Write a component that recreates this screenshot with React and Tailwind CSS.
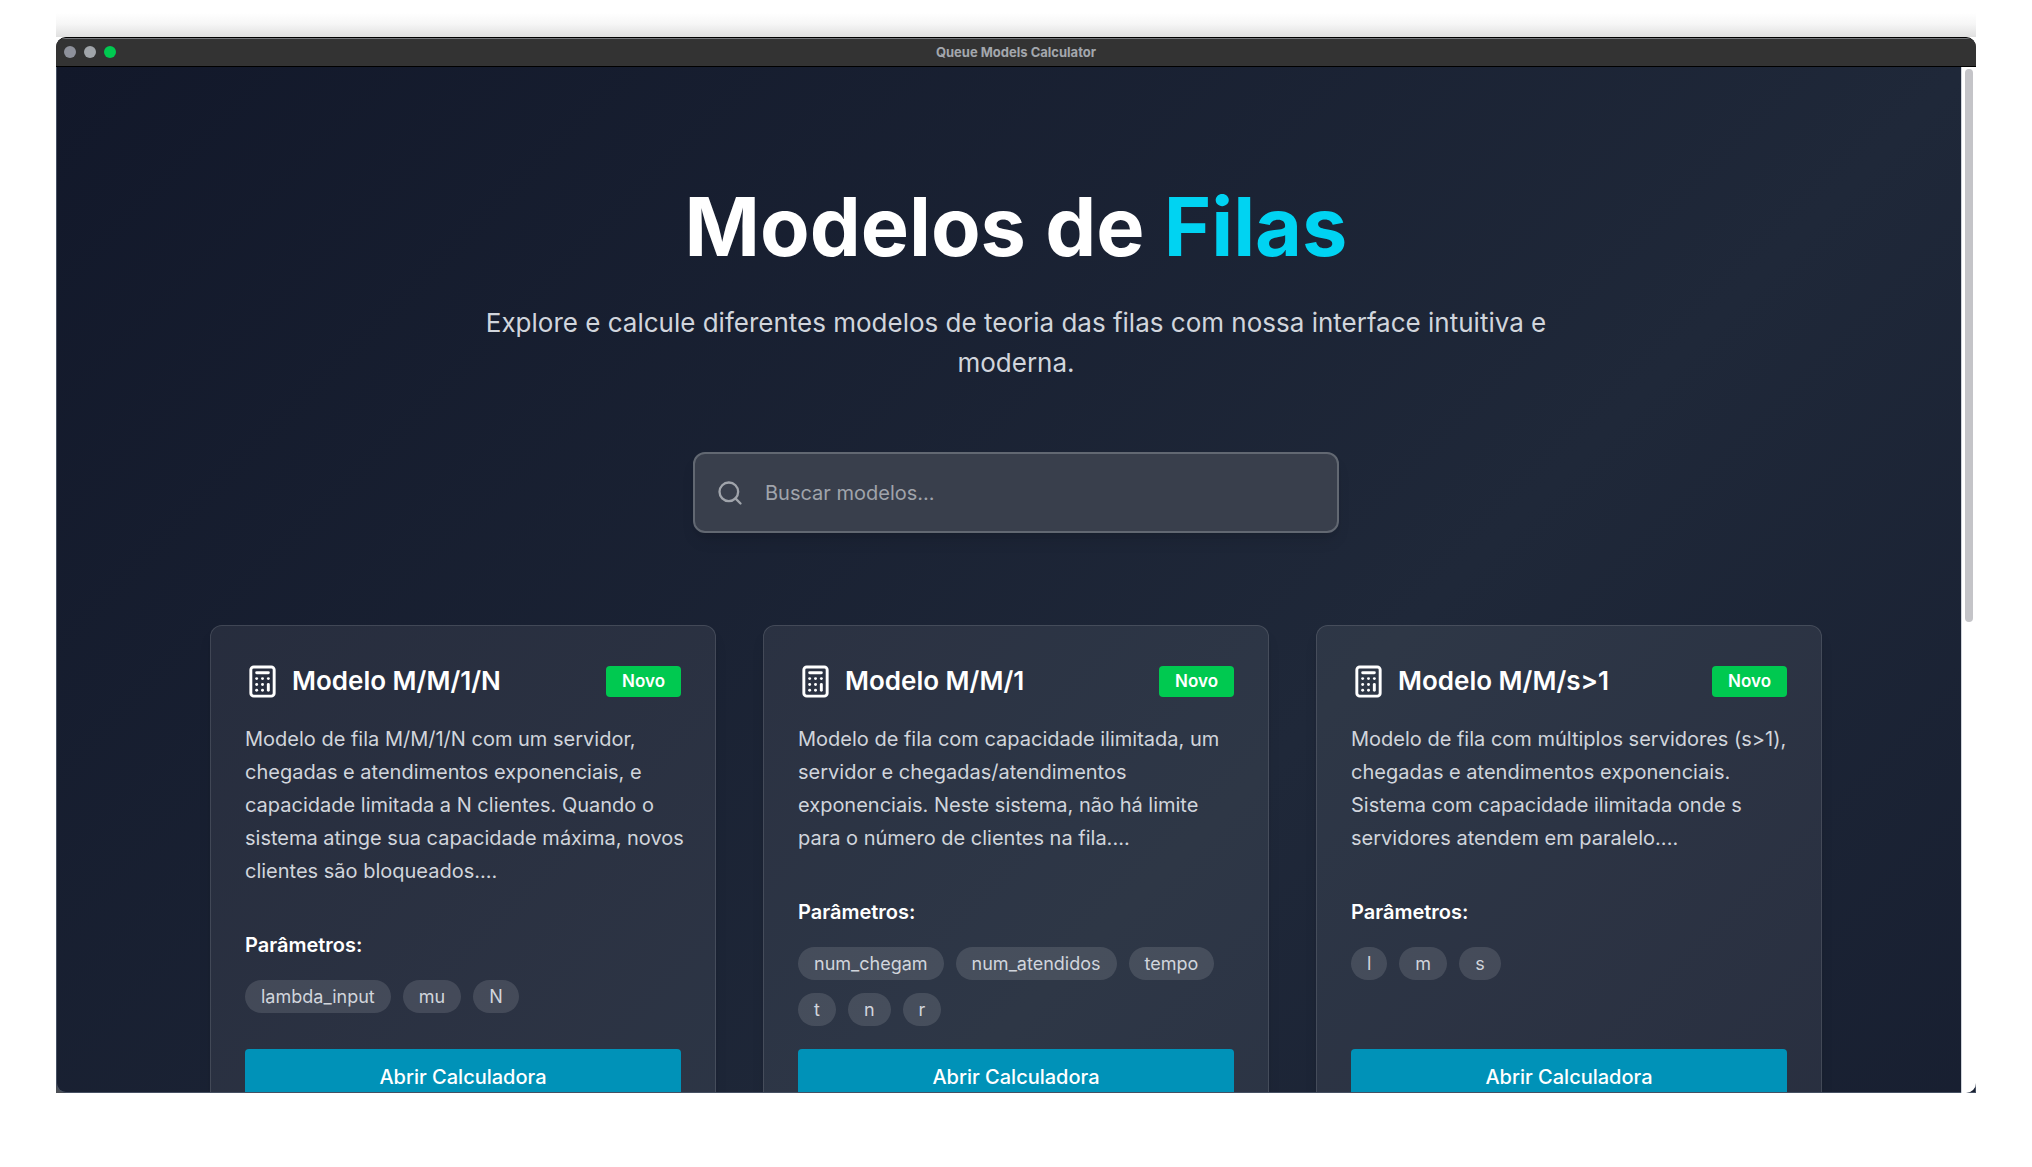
import React, { useState } from 'react';
import { Calculator, Search } from 'lucide-react';

const models = [
  {
    name: 'Modelo M/M/1/N',
    description:
      'Modelo de fila M/M/1/N com um servidor, chegadas e atendimentos exponenciais, e capacidade limitada a N clientes. Quando o sistema atinge sua capacidade máxima, novos clientes são bloqueados....',
    params: ['lambda_input', 'mu', 'N'],
  },
  {
    name: 'Modelo M/M/1',
    description:
      'Modelo de fila com capacidade ilimitada, um servidor e chegadas/atendimentos exponenciais. Neste sistema, não há limite para o número de clientes na fila....',
    params: ['num_chegam', 'num_atendidos', 'tempo', 't', 'n', 'r'],
  },
  {
    name: 'Modelo M/M/s>1',
    description:
      'Modelo de fila com múltiplos servidores (s>1), chegadas e atendimentos exponenciais. Sistema com capacidade ilimitada onde s servidores atendem em paralelo....',
    params: ['l', 'm', 's'],
  },
];

function TitleBar() {
  return (
    <header className="grid h-[29px] shrink-0 grid-cols-3 items-center border-t border-b border-t-[#77797d] border-b-black bg-[#333333] px-2 pb-0.5">
      <div className="flex gap-2">
        <span className="size-3 rounded-full bg-[#8e919b]" />
        <span className="size-3 rounded-full bg-[#a1a5aa]" />
        <span className="size-3 rounded-full bg-[#00c950]" />
      </div>
      <p className="text-center text-[13px] leading-4 font-bold text-[#a3a7ad]">Queue Models Calculator</p>
    </header>
  );
}

function SearchBox({ value, onChange }) {
  return (
    <label className="mx-auto flex h-[81px] w-full max-w-[646px] items-center gap-[21px] rounded-xl border-2 border-[#626872] bg-[#393f4c] px-[21px] shadow-lg">
      <Search className="size-7 shrink-0 text-[#a0a4ab]" strokeWidth={2} />
      <input
        type="text"
        aria-label="Buscar modelos"
        placeholder="Buscar modelos..."
        value={value}
        onChange={(e) => onChange(e.target.value)}
        className="min-w-0 flex-1 bg-transparent text-xl text-white outline-none placeholder:text-[#a0a4ab]"
      />
    </label>
  );
}

function ModelCard({ model }) {
  return (
    <article className="flex flex-col rounded-xl border border-white/12 bg-white/7 p-[34px] shadow-lg">
      <div className="flex h-[42px] items-center justify-between">
        <h2 className="flex items-center gap-3 text-[26px] leading-9 font-semibold text-white">
          <Calculator className="size-[35px] shrink-0" strokeWidth={2} />
          {model.name}
        </h2>
        <span className="rounded-sm bg-[#00c950] px-4 text-[17px] leading-[31px] font-semibold text-white">Novo</span>
      </div>

      <p className="mt-[21px] -mr-2 text-xl leading-[33px] text-gray-300">{model.description}</p>

      <h3 className="mt-[43px] text-xl leading-7 font-semibold text-white">Parâmetros:</h3>
      <ul className="mt-[21px] mb-[23px] flex flex-wrap gap-x-3 gap-y-[13px]">
        {model.params.map((param) => (
          <li key={param} className="rounded-full bg-white/12 px-4 text-lg leading-[33px] text-gray-300">
            {param}
          </li>
        ))}
      </ul>

      <button type="button" className="mt-auto h-14 w-full shrink-0 rounded-sm bg-[#0092b8] text-xl font-medium text-white">
        Abrir Calculadora
      </button>
    </article>
  );
}

export default function App() {
  const [searchTerm, setSearchTerm] = useState('');

  const filteredModels = models.filter((model) =>
    model.name.toLowerCase().includes(searchTerm.toLowerCase())
  );

  return (
    <div className="flex h-screen flex-col bg-white px-14 pb-[74px] font-['Inter',sans-serif]">
      <div className="h-[37px] shrink-0 bg-linear-to-b from-white from-35% via-[#f6f6f6] via-65% to-[#e0e0e0]" />

      <div className="relative flex min-h-0 flex-1 flex-col overflow-hidden rounded-t-[10px] border-t border-t-black bg-[#4b4f56]">
        <TitleBar />

        <main className="min-h-0 flex-1 overflow-hidden rounded-bl-[10px] border-x border-b border-[#465062] bg-linear-135 from-[#12182a] via-[#1f2839] to-[#12182a] bg-[length:100%_1902px] bg-no-repeat px-[153px] pt-[110px]">
          <section className="text-center">
            <h1 className="text-[81px] leading-[100px] font-bold text-white">
              Modelos de <span className="text-[#00d3f2]">Filas</span>
            </h1>
            <p className="mx-auto mt-[26px] max-w-[1106px] text-[26px] leading-10 text-gray-300">
              Explore e calcule diferentes modelos de teoria das filas com nossa interface intuitiva e moderna.
            </p>
          </section>

          <div className="mt-[69px]">
            <SearchBox value={searchTerm} onChange={setSearchTerm} />
          </div>

          <section className="mt-[92px] grid grid-cols-3 gap-[47px]">
            {filteredModels.map((model) => (
              <ModelCard key={model.name} model={model} />
            ))}
          </section>
        </main>

        {/* Scrollbar */}
        <div className="absolute top-[29px] right-0 bottom-0 w-[15px] rounded-br-[10px] border-l border-[#cfd3da] bg-white px-[3px] pt-0.5">
          <div className="h-[54%] w-2 rounded-full bg-[#c4c4c8]" />
        </div>
      </div>
    </div>
  );
}
